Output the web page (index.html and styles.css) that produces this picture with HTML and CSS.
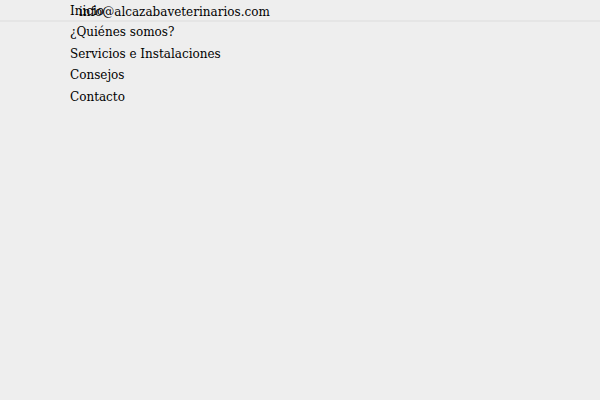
FILE: index.html
```html
<!DOCTYPE html>
<html lang="es">
<head>
<meta charset="utf-8">
<title>Alcazaba Veterinarios</title>
<link rel="stylesheet" href="styles.css">
</head>
<body>
<div class="topbar">
  <span class="email">info@alcazabaveterinarios.com</span>
</div>
<ul class="menu">
  <li><a href="#">Inicio</a></li>
  <li><a href="#">¿Quiénes somos?</a></li>
  <li><a href="#">Servicios e Instalaciones</a></li>
  <li><a href="#">Consejos</a></li>
  <li><a href="#">Contacto</a></li>
</ul>
</body>
</html>
```
FILE: styles.css
```css
html, body {
  margin: 0;
  padding: 0;
  background: #eeeeee;
  font-family: "DejaVu Serif", serif;
  font-size: 12px;
  color: #000;
}
.topbar {
  position: absolute;
  top: 0;
  left: 0;
  right: 0;
  height: 20px;
  border-bottom: 2px solid #e5e5e5;
  padding-left: 79px;
  line-height: 24px;
}
.menu {
  list-style: none;
  margin: 0;
  padding: 0.6px 0 0 70px;
}
.menu li {
  line-height: 21.6px;
}
.menu a {
  color: #000;
  text-decoration: none;
}
```
